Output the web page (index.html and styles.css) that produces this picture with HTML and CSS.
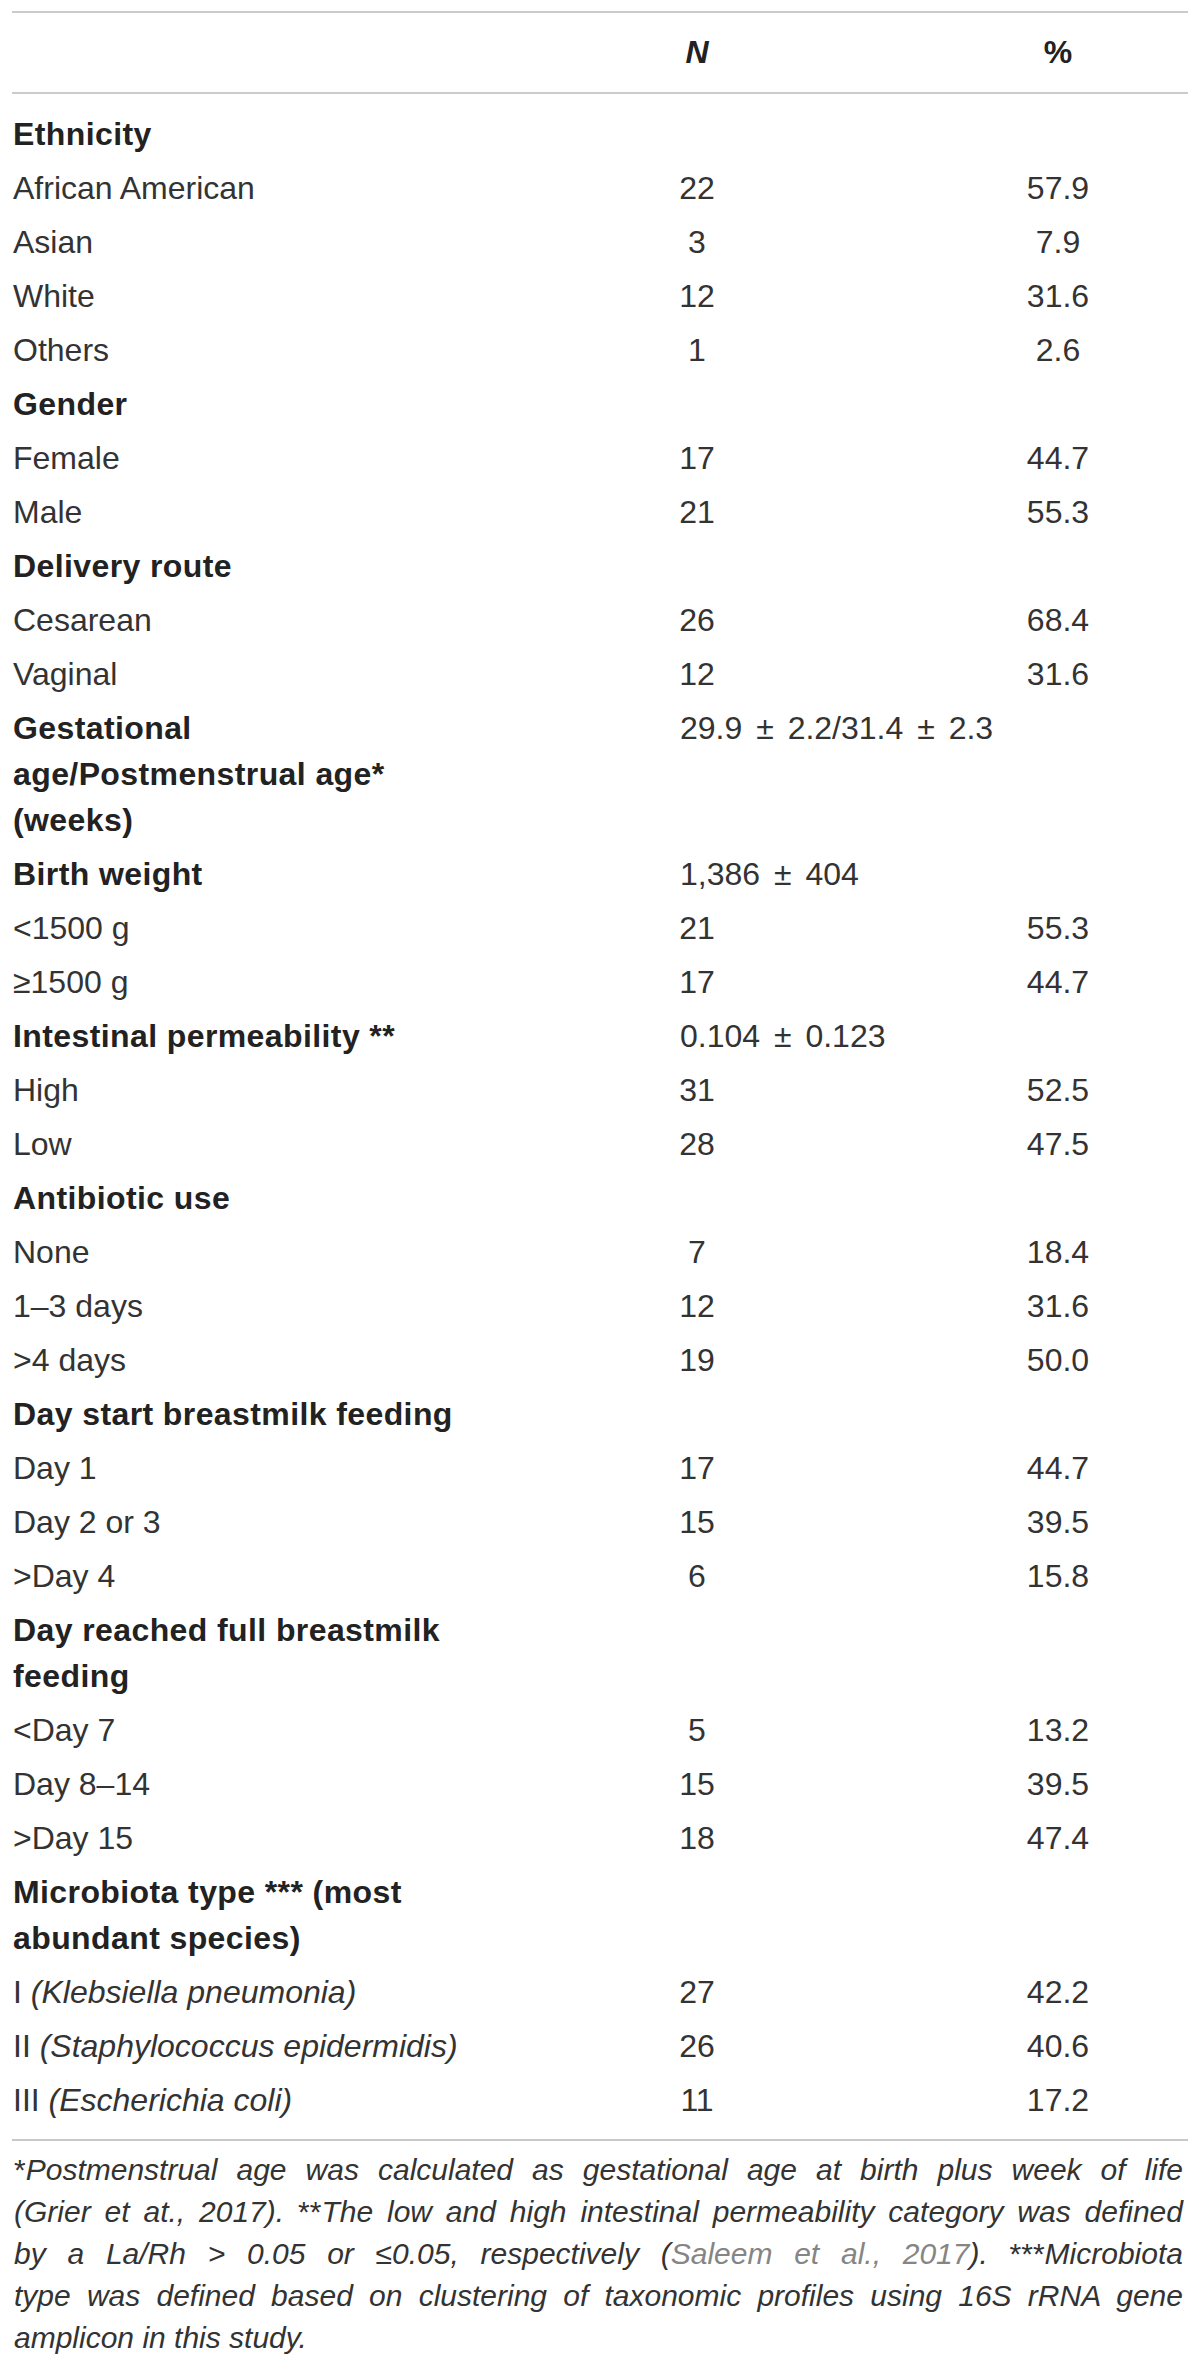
FILE: index.html
```html
<!DOCTYPE html>
<html lang="en">
<head>
    <meta charset="UTF-8">
    <meta name="viewport" content="width=device-width, initial-scale=1.0">
    <title>Demographics of the study cohort</title>
    <link rel="stylesheet" href="styles.css">
</head>
<body>
    <table class="cohort">
        <colgroup>
            <col class="col-label">
            <col class="col-n">
            <col class="col-pct">
        </colgroup>
        <thead>
            <tr>
                <th></th>
                <th class="n"><em>N</em></th>
                <th class="pct">%</th>
            </tr>
        </thead>
        <tbody>
            <tr class="group"><td>Ethnicity</td><td></td><td></td></tr>
            <tr><td>African American</td><td class="n">22</td><td class="pct">57.9</td></tr>
            <tr><td>Asian</td><td class="n">3</td><td class="pct">7.9</td></tr>
            <tr><td>White</td><td class="n">12</td><td class="pct">31.6</td></tr>
            <tr><td>Others</td><td class="n">1</td><td class="pct">2.6</td></tr>

            <tr class="group"><td>Gender</td><td></td><td></td></tr>
            <tr><td>Female</td><td class="n">17</td><td class="pct">44.7</td></tr>
            <tr><td>Male</td><td class="n">21</td><td class="pct">55.3</td></tr>

            <tr class="group"><td>Delivery route</td><td></td><td></td></tr>
            <tr><td>Cesarean</td><td class="n">26</td><td class="pct">68.4</td></tr>
            <tr><td>Vaginal</td><td class="n">12</td><td class="pct">31.6</td></tr>

            <tr class="group">
                <td>Gestational<br>age/Postmenstrual age*<br>(weeks)</td>
                <td class="mean" colspan="2">29.9 ± 2.2/31.4 ± 2.3</td>
            </tr>

            <tr class="group">
                <td>Birth weight</td>
                <td class="mean" colspan="2">1,386 ± 404</td>
            </tr>
            <tr><td>&lt;1500 g</td><td class="n">21</td><td class="pct">55.3</td></tr>
            <tr><td>≥1500 g</td><td class="n">17</td><td class="pct">44.7</td></tr>

            <tr class="group">
                <td>Intestinal permeability **</td>
                <td class="mean" colspan="2">0.104 ± 0.123</td>
            </tr>
            <tr><td>High</td><td class="n">31</td><td class="pct">52.5</td></tr>
            <tr><td>Low</td><td class="n">28</td><td class="pct">47.5</td></tr>

            <tr class="group"><td>Antibiotic use</td><td></td><td></td></tr>
            <tr><td>None</td><td class="n">7</td><td class="pct">18.4</td></tr>
            <tr><td>1–3 days</td><td class="n">12</td><td class="pct">31.6</td></tr>
            <tr><td>&gt;4 days</td><td class="n">19</td><td class="pct">50.0</td></tr>

            <tr class="group"><td>Day start breastmilk feeding</td><td></td><td></td></tr>
            <tr><td>Day 1</td><td class="n">17</td><td class="pct">44.7</td></tr>
            <tr><td>Day 2 or 3</td><td class="n">15</td><td class="pct">39.5</td></tr>
            <tr><td>&gt;Day 4</td><td class="n">6</td><td class="pct">15.8</td></tr>

            <tr class="group"><td>Day reached full breastmilk<br>feeding</td><td></td><td></td></tr>
            <tr><td>&lt;Day 7</td><td class="n">5</td><td class="pct">13.2</td></tr>
            <tr><td>Day 8–14</td><td class="n">15</td><td class="pct">39.5</td></tr>
            <tr><td>&gt;Day 15</td><td class="n">18</td><td class="pct">47.4</td></tr>

            <tr class="group"><td>Microbiota type *** (most<br>abundant species)</td><td></td><td></td></tr>
            <tr><td>I <em>(Klebsiella pneumonia)</em></td><td class="n">27</td><td class="pct">42.2</td></tr>
            <tr><td>II <em>(Staphylococcus epidermidis)</em></td><td class="n">26</td><td class="pct">40.6</td></tr>
            <tr><td>III <em>(Escherichia coli)</em></td><td class="n">11</td><td class="pct">17.2</td></tr>
        </tbody>
    </table>

    <!-- footnote lines are set one by one so each is justified like the print layout -->
    <p class="note">
        <span class="line"><span class="star">*</span>Postmenstrual age was calculated as gestational age at birth plus week of life</span>
        <span class="line">(Grier et at., 2017). <span class="star">**</span>The low and high intestinal permeability category was defined</span>
        <span class="line">by a La/Rh &gt; 0.05 or ≤0.05, respectively (<span class="ref">Saleem et al., 2017</span>). <span class="star">***</span>Microbiota</span>
        <span class="line">type was defined based on clustering of taxonomic profiles using 16S rRNA gene</span>
        <span class="line last">amplicon in this study.</span>
    </p>
</body>
</html>
```

FILE: styles.css
```css
body {
    margin: 0;
    padding: 11px 12px 0;
    font-family: "Liberation Sans", Arial, sans-serif;
    color: #333;
    background: #fff;
}
.cohort {
    width: 1176px;
    table-layout: fixed;
    border-collapse: separate;
    border-spacing: 0;
    font-size: 32px;
    line-height: 46px;
}
.col-label {
    width: 468px;
}
.col-n {
    width: 434px;
}
.col-pct {
    width: 274px;
}
.cohort th {
    border-top: 2px solid #cbcbcb;
    border-bottom: 2px solid #cbcbcb;
    padding: 16px 0 17px;
    font-weight: bold;
    color: #222;
    text-align: center;
}
.cohort td {
    padding: 4px 0;
    vertical-align: top;
    white-space: nowrap;
    text-align: left;
}
.cohort td:first-child {
    padding-left: 1px;
}
.cohort .n {
    text-align: center;
}
.cohort .pct {
    text-align: center;
    padding-left: 14px;
}
.cohort td.mean {
    padding-left: 200px;
    font-weight: normal;
    letter-spacing: 0;
    word-spacing: 5px;
    color: #333;
}
.group td {
    font-weight: bold;
    letter-spacing: 0.4px;
    color: #222;
}
.cohort tbody tr:first-child td {
    padding-top: 17px;
}
.cohort tbody tr:last-child td {
    padding-bottom: 16px;
}
.note {
    margin: 0;
    padding: 8px 5px 0 2px;
    border-top: 2px solid #c8c8c8;
    font-size: 30px;
    line-height: 42px;
    font-style: italic;
    color: #333;
}
.note .line {
    display: block;
    white-space: nowrap;
    text-align: justify;
    text-align-last: justify;
}
.note .line.last {
    text-align-last: left;
}
.note .star {
    font-style: normal;
}
.note .ref {
    color: #858585;
}
```
